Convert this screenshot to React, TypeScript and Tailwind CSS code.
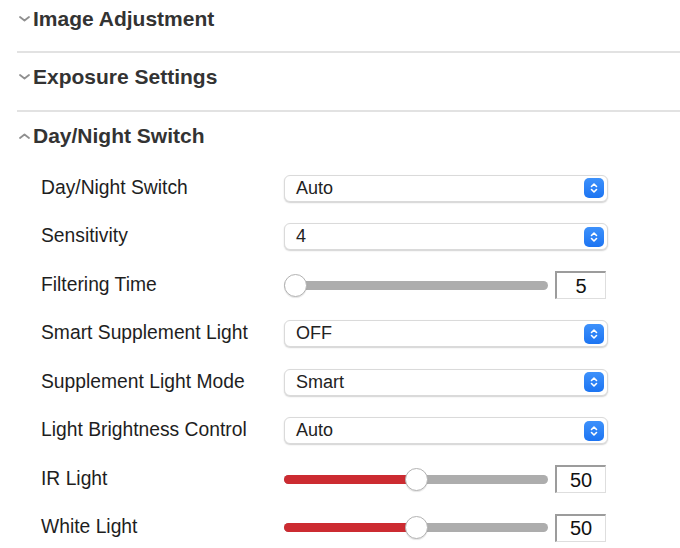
import React from "react";

type Row =
  | { label: string; kind: "select"; value: string }
  | { label: string; kind: "slider"; value: number; min: number; max: number; fill: boolean };

const rows: Row[] = [
  { label: "Day/Night Switch", kind: "select", value: "Auto" },
  { label: "Sensitivity", kind: "select", value: "4" },
  { label: "Filtering Time", kind: "slider", value: 5, min: 5, max: 120, fill: false },
  { label: "Smart Supplement Light", kind: "select", value: "OFF" },
  { label: "Supplement Light Mode", kind: "select", value: "Smart" },
  { label: "Light Brightness Control", kind: "select", value: "Auto" },
  { label: "IR Light", kind: "slider", value: 50, min: 0, max: 100, fill: true },
  { label: "White Light", kind: "slider", value: 50, min: 0, max: 100, fill: true },
];

function Chevron({ open }: { open: boolean }) {
  return (
    <svg width="13" height="8" viewBox="0 0 13 8" className="shrink-0">
      <path
        d={open ? "M2 6 L6.5 2.5 L11 6" : "M2 2 L6.5 5.5 L11 2"}
        fill="none"
        stroke="#8f8f8f"
        strokeWidth="1.8"
        strokeLinecap="round"
        strokeLinejoin="round"
      />
    </svg>
  );
}

function SectionHeader({ title, open, first }: { title: string; open: boolean; first?: boolean }) {
  return (
    <div className={`flex items-center gap-[2px] pl-[18px] ${first ? "h-[38px]" : "h-[48px]"}`}>
      <Chevron open={open} />
      <span className="text-[21px] font-bold text-[#333333]">{title}</span>
    </div>
  );
}

function Divider() {
  return <div className="ml-[17px] h-[2px] bg-[#e2e2e2]" />;
}

function Select({ value }: { value: string }) {
  return (
    <div className="flex h-[27px] w-[324px] items-center justify-between rounded-[6px] border border-[#dadada] bg-white pl-[11px] pr-[3px] shadow-[0_1px_1.5px_rgba(0,0,0,0.18)]">
      <span className="text-[18px] text-[#222222]">{value}</span>
      <div className="flex h-[20px] w-[20px] items-center justify-center rounded-[5px] bg-gradient-to-b from-[#3d91fb] to-[#1c74f2]">
        <svg width="10" height="14" viewBox="0 0 10 14">
          <path d="M2.5 5.5 L5 3 L7.5 5.5 M2.5 8.5 L5 11 L7.5 8.5" fill="none" stroke="white" strokeWidth="1.6" strokeLinecap="round" strokeLinejoin="round" />
        </svg>
      </div>
    </div>
  );
}

function Slider({ value, min, max, fill }: { value: number; min: number; max: number; fill: boolean }) {
  const pct = (value - min) / (max - min);
  const thumb = 23;
  return (
    <div className="flex items-center gap-[7px]">
      <div className="relative flex h-[24px] w-[264px] items-center">
        <div className="relative h-[9px] w-full overflow-hidden rounded-full bg-[#adadad]">
          {fill && (
            <div
              className="h-full bg-[#cc2b31]"
              style={{ width: `calc(${pct} * (100% - ${thumb}px) + ${thumb / 2}px)` }}
            />
          )}
        </div>
        <div
          className="absolute top-[0.5px] h-[23px] w-[23px] rounded-full border-[1.5px] border-[#b3b3b3] bg-white shadow-[0_1px_1px_rgba(0,0,0,0.1)]"
          style={{ left: `calc(${pct} * (100% - ${thumb}px))` }}
        />
      </div>
      <div className="flex h-[28px] w-[51px] items-center justify-center border-t-2 border-l-2 border-r border-b border-t-[#9c9c9c] border-l-[#9c9c9c] border-r-[#dedede] border-b-[#dedede] bg-white text-[20px] text-[#111111]">
        {value}
      </div>
    </div>
  );
}

export default function App() {
  return (
    <div className="h-[548px] w-[680px] overflow-hidden bg-white font-['Liberation_Sans',Arial,sans-serif]">
      <SectionHeader title="Image Adjustment" open={false} first />
      <div className="h-[13px]" />
      <Divider />
      <SectionHeader title="Exposure Settings" open={false} />
      <div className="h-[9px]" />
      <Divider />
      <SectionHeader title="Day/Night Switch" open />
      <div className="pt-[4px]">
        {rows.map((r) => (
          <div key={r.label} className="flex h-[48.5px] items-center pl-[41px]">
            <div className="w-[243px] text-[19.3px] text-[#1e1e1e]">{r.label}</div>
            {r.kind === "select" ? (
              <Select value={r.value} />
            ) : (
              <Slider value={r.value} min={r.min} max={r.max} fill={r.fill} />
            )}
          </div>
        ))}
      </div>
    </div>
  );
}
